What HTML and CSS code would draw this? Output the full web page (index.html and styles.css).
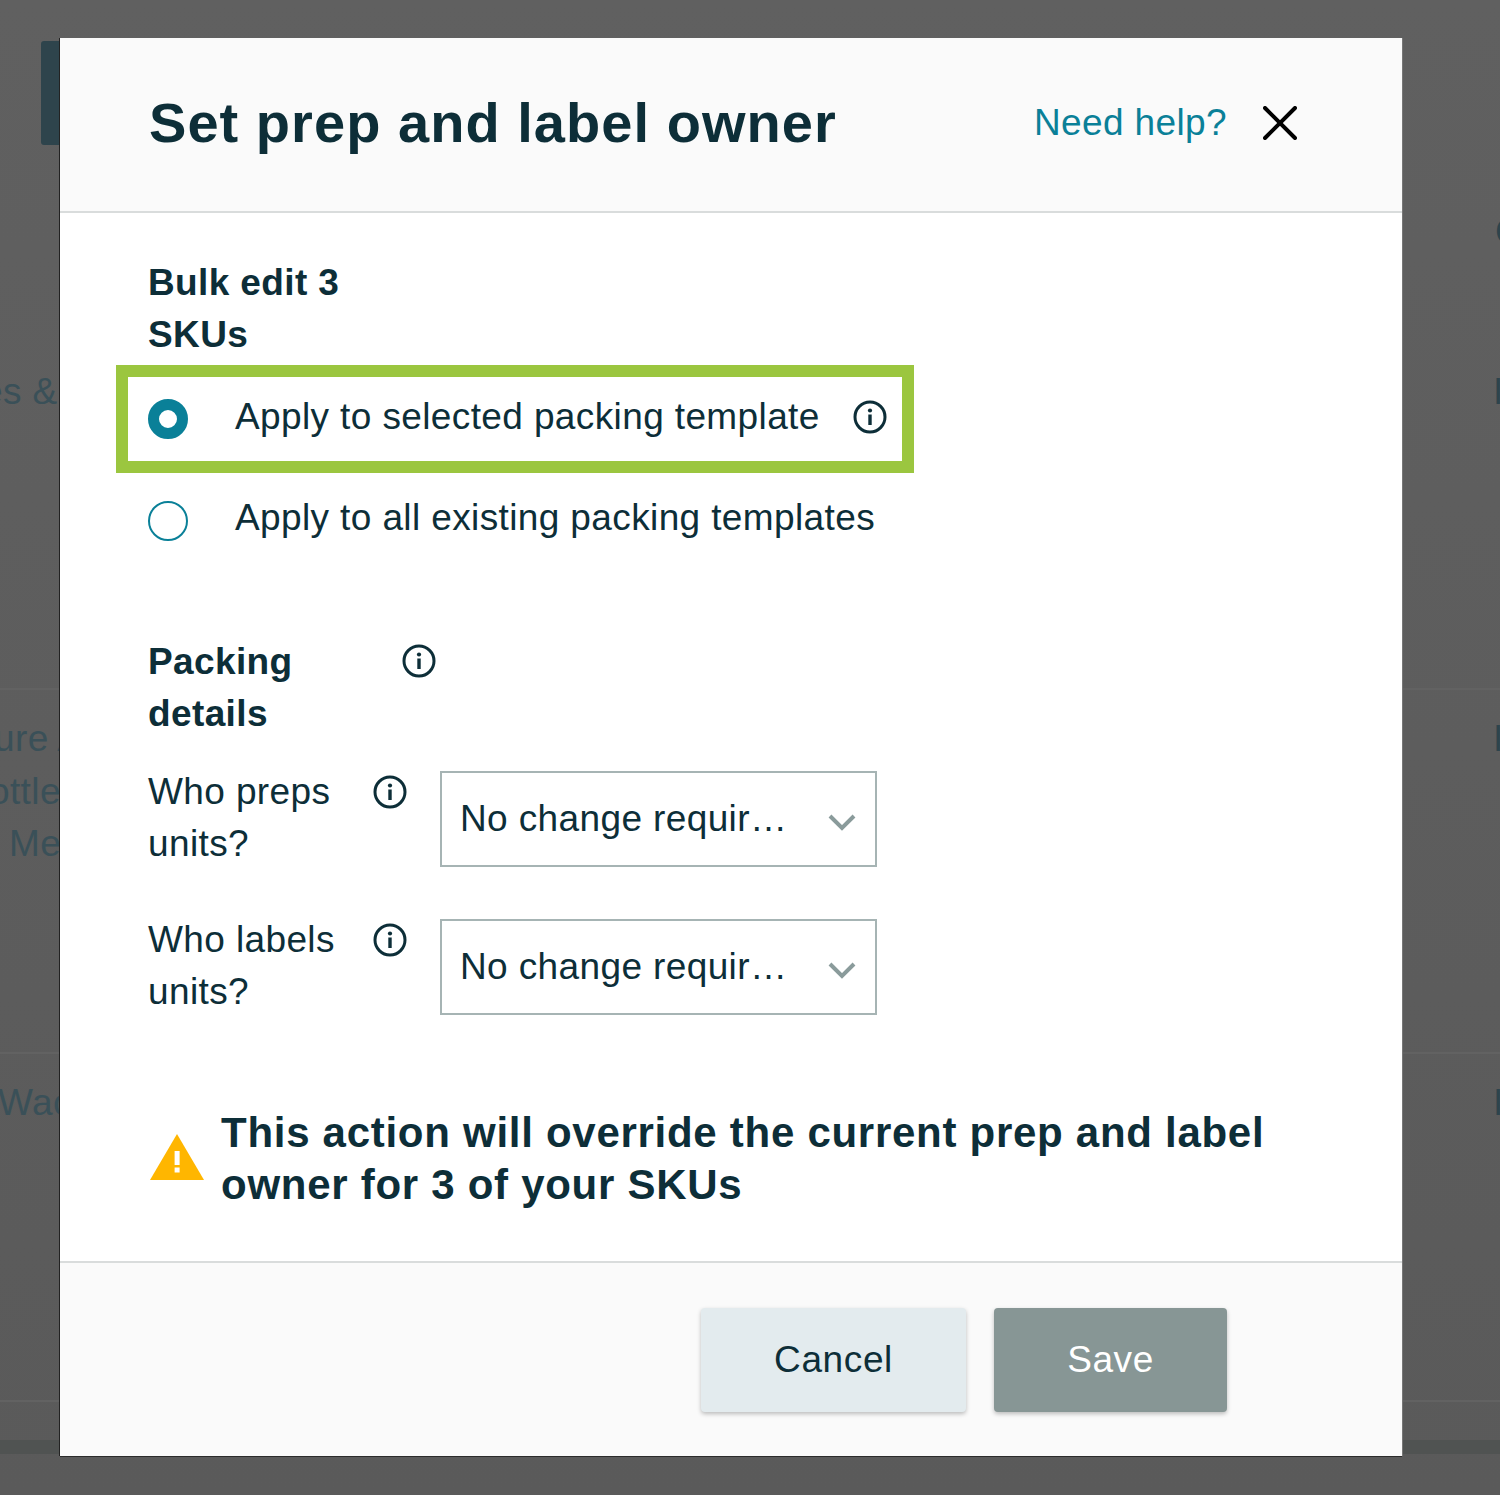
FILE: index.html
```html
<!DOCTYPE html>
<html lang="en">
<head>
<meta charset="utf-8">
<title>Set prep and label owner</title>
<link rel="stylesheet" href="styles.css">
</head>
<body>
<svg class="defs" width="0" height="0" aria-hidden="true">
  <symbol id="info" viewBox="0 0 34 34">
    <circle cx="17" cy="17" r="15" fill="none" stroke="currentColor" stroke-width="3"/>
    <circle cx="17" cy="10.5" r="2.1" fill="currentColor"/>
    <rect x="15.3" y="14.5" width="3.4" height="10.5" fill="currentColor"/>
  </symbol>
  <symbol id="chev" viewBox="0 0 28 18">
    <path d="M2 3l12 12L26 3" fill="none" stroke="currentColor" stroke-width="4"/>
  </symbol>
</svg>

<div class="backdrop" aria-hidden="true">
  <div class="bg-btn"></div>
  <span class="bg-text bg-t1">es &amp;</span>
  <span class="bg-text bg-t2">ure A</span>
  <span class="bg-text bg-t3">ottle</span>
  <span class="bg-text bg-t4">Me</span>
  <span class="bg-text bg-t5">Wac</span>
  <span class="bg-text bg-dark bg-r1">C</span>
  <span class="bg-text bg-dark bg-r2">I</span>
  <span class="bg-text bg-dark bg-r3">I</span>
  <span class="bg-text bg-dark bg-r4">I</span>
  <div class="bg-line bg-l1"></div>
  <div class="bg-line bg-l2"></div>
  <div class="bg-line bg-l3"></div>
  <div class="bg-band"></div>
</div>

<main class="modal">
  <header class="modal-head">
    <h1 class="title">Set prep and label owner</h1>
    <a class="help" href="#">Need help?</a>
    <svg class="close" viewBox="0 0 34 34" aria-label="Close"><path d="M2 2l30 30M32 2L2 32" fill="none" stroke="#000" stroke-width="4" stroke-linecap="round"/></svg>
  </header>

  <section class="modal-body">
    <h2 class="heading bulk">Bulk edit 3 SKUs</h2>

    <div class="highlight">
      <label class="radio-row">
        <span class="radio radio-on"></span>
        <span class="radio-label label-first">Apply to selected packing template</span>
        <svg class="info info-a"><use href="#info"/></svg>
      </label>
    </div>
    <label class="radio-row second">
      <span class="radio"></span>
      <span class="radio-label">Apply to all existing packing templates</span>
    </label>

    <div class="packing-head">
      <h2 class="heading packing">Packing details</h2>
      <svg class="info"><use href="#info"/></svg>
    </div>

    <div class="field field-1">
      <span class="field-label">Who preps units?</span>
      <svg class="info"><use href="#info"/></svg>
      <div class="select"><span class="select-value">No change requir…</span><svg class="chev"><use href="#chev"/></svg></div>
    </div>
    <div class="field field-2">
      <span class="field-label">Who labels units?</span>
      <svg class="info"><use href="#info"/></svg>
      <div class="select"><span class="select-value">No change requir…</span><svg class="chev"><use href="#chev"/></svg></div>
    </div>

    <div class="warning">
      <svg class="warn-icon" viewBox="0 0 54 46"><path d="M27 0l27 46H0z" fill="#ffb600"/><rect x="24.6" y="17" width="5" height="14" fill="#fff"/><rect x="24.6" y="33.500" width="5" height="5" fill="#fff"/></svg>
      <p class="warn-text">This action will override the current prep and label owner for 3 of your SKUs</p>
    </div>
  </section>

  <footer class="modal-foot">
    <button class="btn btn-cancel" type="button">Cancel</button>
    <button class="btn btn-save" type="button">Save</button>
  </footer>
</main>
</body>
</html>
```
FILE: styles.css
```css
* { box-sizing: border-box; }
html, body { margin: 0; }
body {
  position: relative;
  width: 1500px;
  height: 1495px;
  overflow: hidden;
  background: linear-gradient(#606060, #5a5a5a);
  font-family: "Liberation Sans", Arial, sans-serif;
  color: #0d2e38;
  letter-spacing: .38px;
  padding: 38px 0 0 60px;
}
.defs { position: absolute; }

/* dimmed page behind the dialog */
.backdrop { position: absolute; inset: 0; }
.bg-btn { position: absolute; left: 41px; top: 41px; width: 24px; height: 104px; background: #2e444c; border-radius: 3px; }
.bg-text { position: absolute; font-size: 37px; line-height: 52px; color: #3a5058; white-space: nowrap; }
.bg-dark { color: #2e444c; }
.bg-t1 { left: -18px; top: 366px; }
.bg-t2 { left: -6px; top: 713px; }
.bg-t3 { left: -11px; top: 766px; }
.bg-t4 { left: 9px; top: 818px; }
.bg-t5 { left: -2px; top: 1077px; }
.bg-r1 { left: 1495px; top: 206px; }
.bg-r2 { left: 1493px; top: 366px; }
.bg-r3 { left: 1493px; top: 713px; }
.bg-r4 { left: 1493px; top: 1077px; }
.bg-line { position: absolute; left: 0; right: 0; height: 2px; background: #626262; }
.bg-l1 { top: 688px; }
.bg-l2 { top: 1052px; }
.bg-l3 { top: 1400px; }
.bg-band { position: absolute; left: 0; right: 0; top: 1440px; height: 14px; background: #505352; }

/* dialog */
.modal {
  position: relative;
  width: 1342px;
  height: 1418px;
  display: flex;
  flex-direction: column;
  background: #fff;
  box-shadow: -1px 0 0 #222, 0 1px 0 #2b2b2b, 1px 0 0 #777;
}
.modal-head {
  height: 175px;
  flex: none;
  display: flex;
  align-items: center;
  padding: 0 105px 4px 89px;
  background: #fafafa;
  border-bottom: 2px solid #d9dcdc;
}
.title { margin: 0; flex: 1; font-size: 56px; line-height: 64px; font-weight: 700; letter-spacing: 1.04px; color: #0d2e38; }
.help { font-size: 37px; line-height: 52px; color: #0a8098; text-decoration: none; }
.close { width: 34px; height: 34px; margin-left: 36px; }

.modal-body { flex: 1; min-height: 0; padding: 44px 88px 0; }
.heading { margin: 0; font-size: 37px; line-height: 52px; font-weight: 700; color: #0d2e38; }
.bulk { width: 230px; }

.highlight {
  width: 798px;
  height: 108px;
  margin: 4px 0 0 -32px;
  padding-left: 20px;
  border: 12px solid #9bc63f;
  display: flex;
  align-items: center;
}
.radio-row { display: flex; align-items: center; }
.radio {
  width: 40px;
  height: 40px;
  flex: none;
  border-radius: 50%;
  border: 2px solid #0a8098;
  background: #fff;
  margin-right: 47px;
}
.radio-on { border-width: 11px; }
.radio-label { font-size: 37px; line-height: 52px; color: #0d2e38; white-space: nowrap; position: relative; top: -3px; }
.label-first { top: -2px; }
.info { width: 34px; height: 34px; flex: none; color: #0d2e38; }
.info-a { margin-left: 33px; position: relative; top: -2px; }
.second { margin-top: 22px; }

.packing-head { display: flex; margin-top: 89px; }
.packing { width: 254px; padding-right: 100px; }
.packing-head .info { margin-top: 8px; }

.field { display: grid; grid-template-columns: 225px 67px 437px; align-items: start; }
.field-1 { margin-top: 31px; }
.field-2 { margin-top: 49px; }
.field-label { font-size: 37px; line-height: 52px; margin-top: -5px; padding-right: 20px; }
.field .info { margin-top: 4px; }
.select {
  width: 437px;
  height: 96px;
  display: flex;
  align-items: center;
  justify-content: space-between;
  padding: 0 19px 0 18px;
  border: 2px solid #a6b4b4;
  background: #fff;
}
.select-value { font-size: 37px; line-height: 52px; }
.chev { width: 28px; height: 18px; color: #8a9b9b; position: relative; top: 3px; }

.warning { display: flex; align-items: center; margin-top: 89px; }
.warn-icon { width: 54px; height: 46px; flex: none; margin: 0 17px 4px 2px; }
.warn-text { margin: 0; font-size: 42px; line-height: 52px; font-weight: 700; letter-spacing: .72px; color: #0d2e38; width: 1060px; }

.modal-foot {
  height: 195px;
  flex: none;
  display: flex;
  padding: 45px 175px 0 641px;
  gap: 28px;
  background: #fafafa;
  border-top: 2px solid #d9dcdc;
}
.btn {
  height: 104px;
  border: 0;
  border-radius: 4px;
  font-family: inherit;
  font-size: 37px;
  letter-spacing: .6px;
  box-shadow: 0 2px 4px rgba(0, 0, 0, .25);
}
.btn-cancel { width: 265px; background: #e3ebee; color: #0d2e38; }
.btn-save { width: 233px; background: #879695; color: #fff; }
```
